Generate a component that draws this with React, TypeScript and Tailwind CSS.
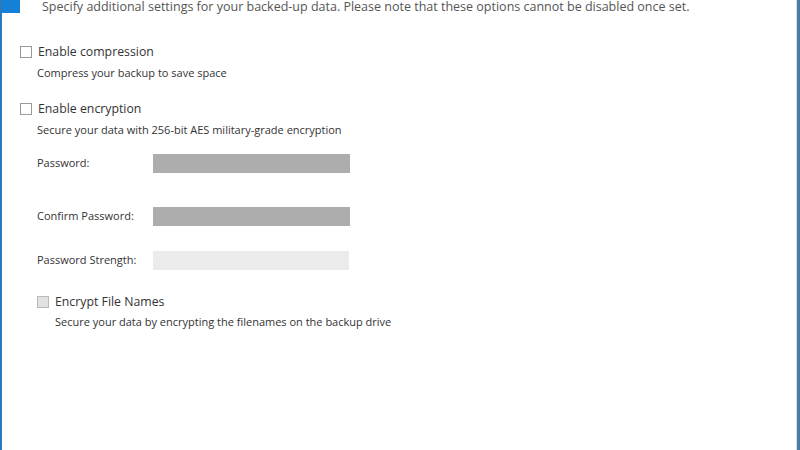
import React, { useState } from 'react';

const font = { fontFamily: '"Open Sans", "Noto Sans", sans-serif' };

function Check({ checked, onChange, filled }: { checked: boolean; onChange: () => void; filled?: boolean }) {
  return (
    <button
      type="button"
      onClick={onChange}
      className={`w-[12px] h-[12px] shrink-0 border flex items-center justify-center ${
        filled ? 'bg-[#e2e2e2] border-[#b9b9b9]' : 'bg-white border-[#9a9a9a]'
      }`}
    >
      {checked && <span className="w-[6px] h-[6px] bg-[#333]" />}
    </button>
  );
}

function App() {
  const [compress, setCompress] = useState(false);
  const [encrypt, setEncrypt] = useState(false);
  const [names, setNames] = useState(false);

  return (
    <div className="w-[800px] h-[450px] overflow-hidden bg-white flex" style={font}>
      <div className="w-[2px] bg-[#2a79bf]" />
      <div className="flex-1 flex flex-col text-[#333]">
        <div className="flex items-start h-[13px]">
          <div className="w-[18px] h-[13px] bg-[#1581d6]" />
          <p className="ml-[22px] -mt-[3px] text-[12.5px] leading-[20px] text-[#555] whitespace-nowrap">
            Specify additional settings for your backed-up data. Please note that these options cannot be disabled once set.
          </p>
        </div>

        <div className="pl-[18px] pt-[29px]">
          <label className="flex items-center gap-[6px] h-[20px]">
            <Check checked={compress} onChange={() => setCompress(!compress)} />
            <span className="text-[12.3px]">Enable compression</span>
          </label>
          <p className="pl-[17px] mt-[2px] text-[11px] leading-[18px]">Compress your backup to save space</p>

          <label className="flex items-center gap-[6px] h-[20px] mt-[17px]">
            <Check checked={encrypt} onChange={() => setEncrypt(!encrypt)} />
            <span className="text-[12.3px]">Enable encryption</span>
          </label>
          <p className="pl-[17px] mt-[2px] text-[11px] leading-[18px]">
            Secure your data with 256-bit AES military-grade encryption
          </p>

          <div className="pl-[17px] mt-[14px] flex flex-col gap-[33px] text-[11px]">
            <div className="flex items-center h-[20px]">
              <span className="w-[116px]">Password:</span>
              <div className="w-[197px] h-[19px] bg-[#adadad]" />
            </div>
            <div className="flex items-center h-[20px]">
              <span className="w-[116px]">Confirm Password:</span>
              <div className="w-[197px] h-[19px] bg-[#adadad]" />
            </div>
            <div className="flex items-center h-[20px] -mt-[9px]">
              <span className="w-[116px]">Password Strength:</span>
              <div className="w-[196px] h-[19px] bg-[#ebebeb]" />
            </div>
          </div>

          <div className="pl-[17px] mt-[22px]">
            <label className="flex items-center gap-[6px] h-[20px]">
              <Check filled checked={names} onChange={() => setNames(!names)} />
              <span className="text-[12.3px]">Encrypt File Names</span>
            </label>
            <p className="pl-[18px] mt-[1px] text-[11px] leading-[18px]">
              Secure your data by encrypting the filenames on the backup drive
            </p>
          </div>
        </div>
      </div>
      <div className="w-[1px] bg-[#cfe2f1]" />
      <div className="w-[3px] bg-[#4f7aa2]" />
    </div>
  );
}

export default App;
